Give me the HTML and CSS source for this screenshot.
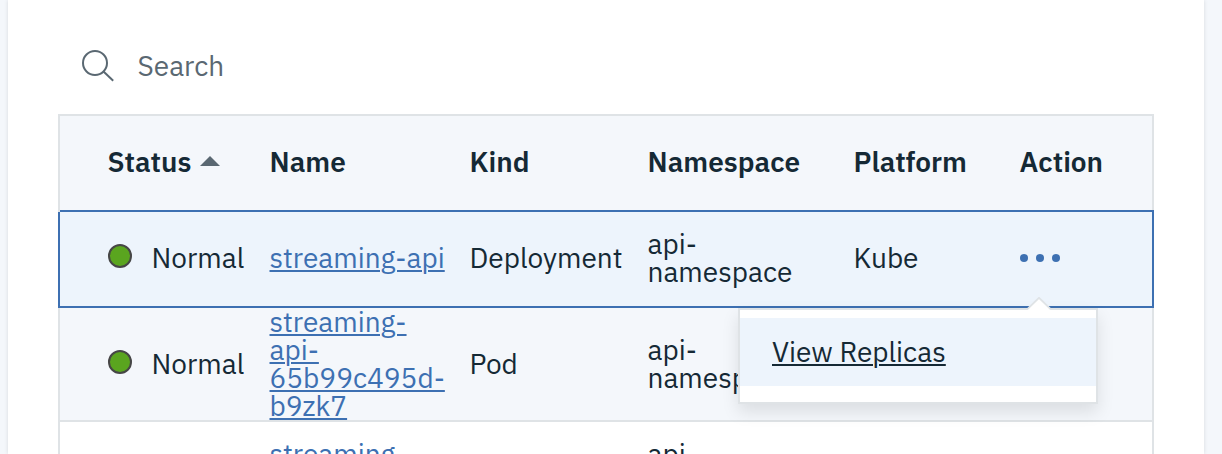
FILE: index.html
```html
<!DOCTYPE html>
<html lang="en">
<head>
<meta charset="utf-8">
<title>Resources</title>
<link rel="stylesheet" href="styles.css">
</head>
<body>
<main class="panel">
  <div class="search">
    <svg class="search-icon" width="34" height="34" viewBox="0 0 34 34" fill="none" stroke="#5a6872" stroke-width="2"><circle cx="14" cy="14" r="12"/><path d="M22.5 22.5 32.2 31.8"/></svg>
    <span>Search</span>
  </div>
  <div class="table">
    <div class="row head">
      <div class="cell sort"><span>Status</span><svg class="sort-icon" width="20" height="10" viewBox="0 0 20 10"><path d="M0 10 10 0l10 10z" fill="#5a6872"/></svg></div>
      <div class="cell">Name</div>
      <div class="cell">Kind</div>
      <div class="cell">Namespace</div>
      <div class="cell">Platform</div>
      <div class="cell">Action</div>
    </div>
    <div class="row selected">
      <div class="cell status"><i class="dot"></i><span>Normal</span></div>
      <div class="cell"><a class="link">streaming-api</a></div>
      <div class="cell">Deployment</div>
      <div class="cell">api-<br>namespace</div>
      <div class="cell">Kube</div>
      <div class="cell action">
        <svg class="more" width="40" height="8" viewBox="0 0 40 8" fill="#3d70b2"><circle cx="4" cy="4" r="4"/><circle cx="20" cy="4" r="4"/><circle cx="36" cy="4" r="4"/></svg>
        <div class="menu">
          <svg class="caret" width="24" height="13" viewBox="0 0 24 13"><path d="M0 13 12 1l12 12z" fill="#fff"/><path d="M0 12.5 12 .8l12 11.7" fill="none" stroke="#dfe3e6" stroke-width="1.8"/></svg>
          <div class="item"><a>View Replicas</a></div>
        </div>
      </div>
    </div>
    <div class="row second">
      <div class="cell status"><i class="dot"></i><span>Normal</span></div>
      <div class="cell"><a class="link">streaming-<br>api-<br>65b99c495d-<br>b9zk7</a></div>
      <div class="cell">Pod</div>
      <div class="cell">api-<br>namespace</div>
      <div class="cell"></div>
      <div class="cell"></div>
    </div>
    <div class="row third">
      <div class="cell"></div>
      <div class="cell"><a class="link">streaming-</a></div>
      <div class="cell"></div>
      <div class="cell">api-</div>
      <div class="cell"></div>
      <div class="cell"></div>
    </div>
  </div>
</main>
</body>
</html>
```
FILE: styles.css
```css
* { box-sizing: border-box; }
body {
  margin: 0;
  height: 454px;
  overflow: hidden;
  background: #f4f7fb;
  color: #152935;
  font: 400 28px/28px "IBM Plex Sans", Roboto, sans-serif;
}
svg { display: block; flex: none; }
.panel {
  width: 1196px;
  height: 454px;
  overflow: hidden;
  margin-left: 8px;
  padding: 0 50px;
  background: #fff;
  box-shadow: 0 0 4px rgba(0, 0, 0, .12);
}
.search {
  display: flex;
  align-items: center;
  gap: 22.5px;
  height: 114px;
  padding: 18px 0 0 23px;
  color: #5a6872;
}
.table { width: 1096px; }
.row {
  display: grid;
  grid-template-columns: 161.5px 200px 178px 206px 166px 1fr;
  align-items: center;
  padding-left: 48px;
  border: 0 solid #dfe3e6;
  border-width: 0 2px 2px;
  background: #f4f7fb;
}
.head {
  height: 96px;
  padding-bottom: 2px;
  border-width: 2px 2px 0;
  font-weight: 600;
}
.selected {
  position: relative;
  height: 98px;
  padding-bottom: 2px;
  border: 2px solid #3d70b2;
  background: #edf4fc;
}
/* the table's side border runs through the row's top-left corner */
.selected::before {
  content: "";
  position: absolute;
  top: -2px;
  left: -2px;
  width: 2px;
  height: 2px;
  background: #dfe3e6;
}
.second { height: 114px; }
.third {
  height: 96px;
  padding-top: 18px;
  align-items: start;
  background: #fff;
}
.cell { white-space: nowrap; }
.sort { display: flex; align-items: center; gap: 8.5px; margin-left: -.5px; }
.sort-icon { margin-bottom: 2px; }
.status { display: flex; align-items: center; gap: 19.5px; }
.dot {
  width: 24px;
  height: 24px;
  margin-bottom: 4px;
  border: 2px solid #464646;
  border-radius: 50%;
  background: #5aa51f;
}
.link {
  color: #3d70b2;
  text-decoration: underline;
}
.action { position: relative; }
.more { margin-left: .5px; }
.menu {
  position: absolute;
  top: 54px;
  right: 54px;
  z-index: 2;
  width: 360px;
  height: 96px;
  padding-top: 8px;
  border: 2px solid #dfe3e6;
  background: #fff;
  box-shadow: 0 8px 16px rgba(0, 0, 0, .1);
}
.caret { position: absolute; top: -13px; right: 45px; }
.item {
  display: flex;
  align-items: center;
  height: 68px;
  padding-left: 32px;
  background: #edf4fc;
}
.item a { text-decoration: underline; }
.link, .item a {
  text-decoration-thickness: 2px;
  text-underline-offset: 2px;
}
```
